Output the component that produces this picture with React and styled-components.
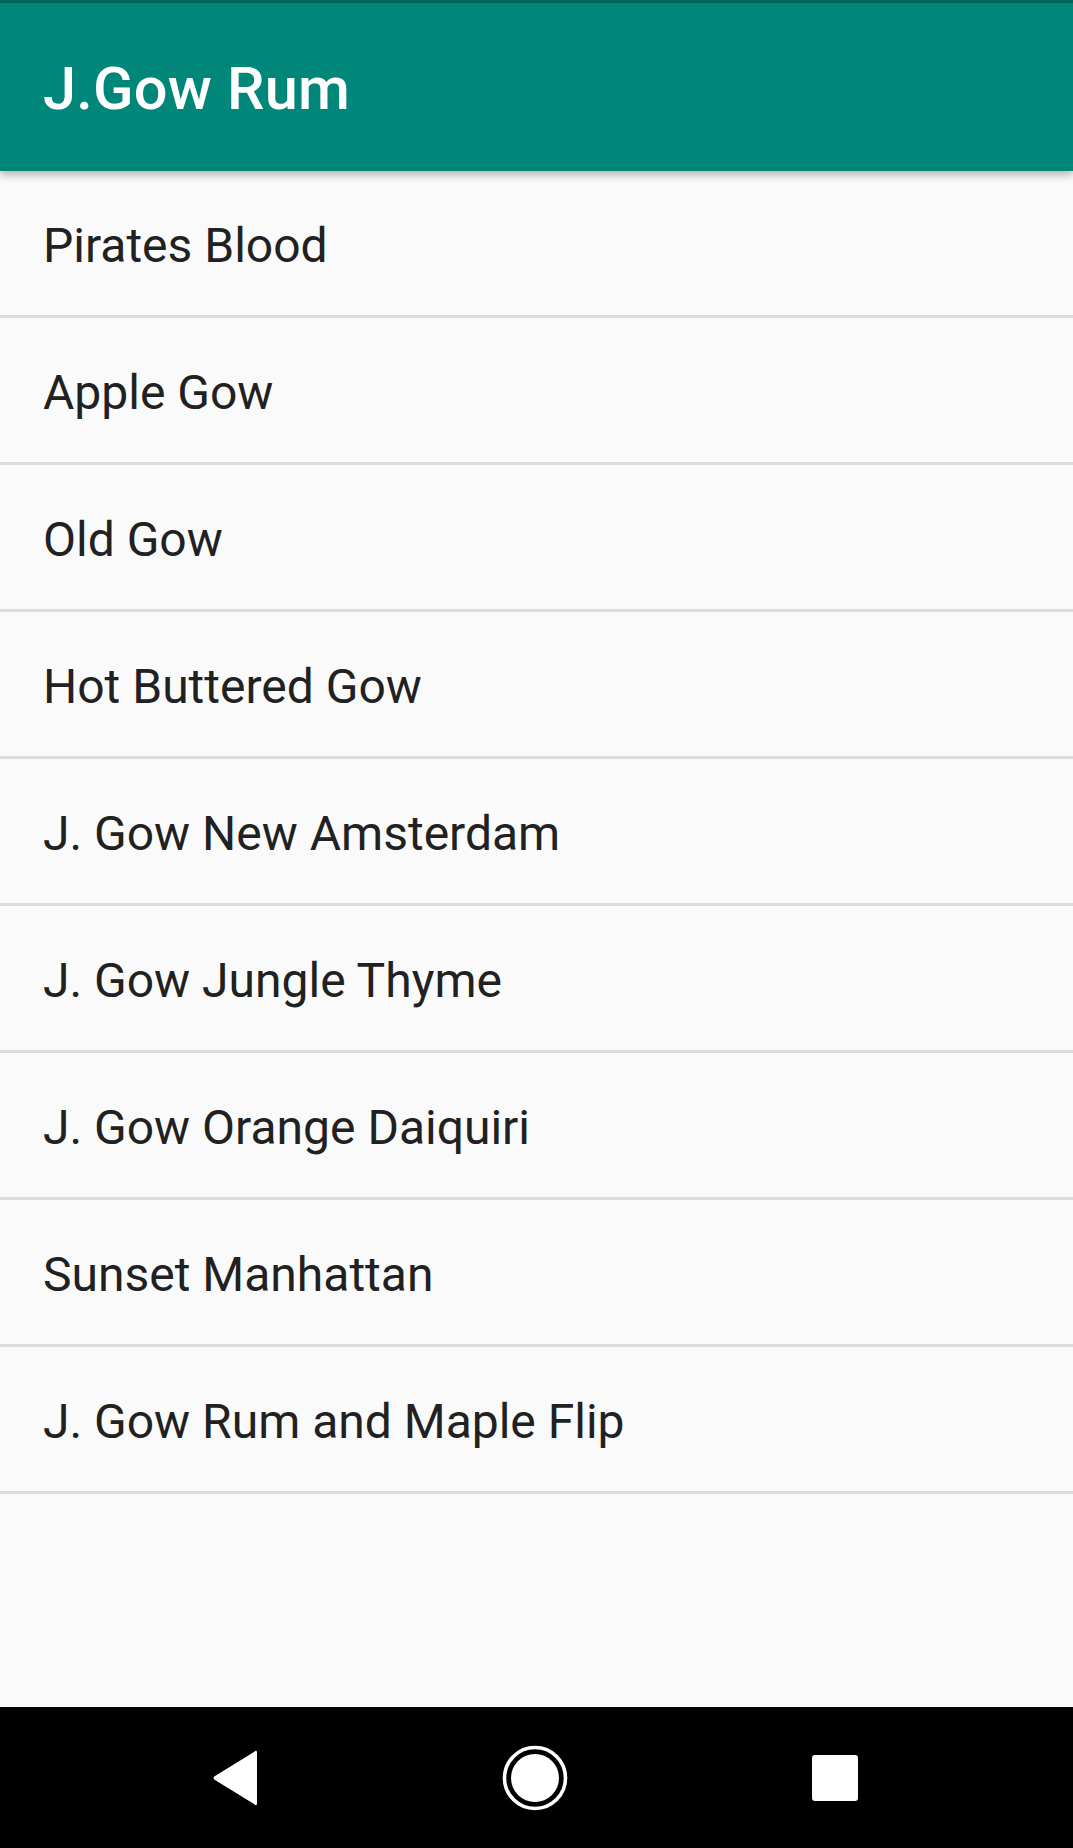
import styled, { createGlobalStyle } from "styled-components";

const drinks = [
  "Pirates Blood",
  "Apple Gow",
  "Old Gow",
  "Hot Buttered Gow",
  "J. Gow New Amsterdam",
  "J. Gow Jungle Thyme",
  "J. Gow Orange Daiquiri",
  "Sunset Manhattan",
  "J. Gow Rum and Maple Flip",
];

const GlobalStyle = createGlobalStyle`
  html, body {
    margin: 0;
    padding: 0;
    background: #fafafa;
  }
  * {
    box-sizing: border-box;
  }
`;

const Screen = styled.div`
  width: 1073px;
  height: 1848px;
  display: flex;
  flex-direction: column;
  background: #fafafa;
  font-family: Roboto, "Noto Sans", sans-serif;
  overflow: hidden;
`;

const StatusEdge = styled.div`
  height: 3px;
  background: #00695c;
`;

const Toolbar = styled.header`
  position: relative;
  z-index: 1;
  height: 168px;
  display: flex;
  align-items: center;
  padding: 4px 43px 0;
  background: #00877a;
  box-shadow: 0 4px 8px rgba(0, 0, 0, 0.28);
`;

const Title = styled.h1`
  margin: 0;
  color: #fff;
  font-size: 59.5px;
  font-weight: 500;
  letter-spacing: 0.2px;
`;

const List = styled.ul`
  flex: 1;
  margin: 0;
  padding: 0;
  list-style: none;
`;

const Row = styled.li`
  height: 147px;
  display: flex;
  align-items: center;
  padding: 4px 43px 0;
  border-bottom: 3px solid #dcdcdc;
  color: #212121;
  font-size: 48px;
`;

const NavBar = styled.nav`
  height: 141px;
  background: #000;
  display: flex;
  align-items: center;
  justify-content: center;
  padding-right: 4px;
`;

const NavSlot = styled.div`
  width: 300px;
  display: flex;
  justify-content: center;
  align-items: center;
`;

const App = () => {
  return (
    <Screen>
      <GlobalStyle />
      <StatusEdge />
      <Toolbar>
        <Title>J.Gow Rum</Title>
      </Toolbar>
      <List>
        {drinks.map((d) => (
          <Row key={d}>{d}</Row>
        ))}
      </List>
      <NavBar>
        <NavSlot>
          <svg width="50" height="58" viewBox="0 0 50 58">
            <path
              d="M47 4 L47 54 Q47 58 44 55 L5 31 Q2 29 5 27 L44 3 Q47 0 47 4 Z"
              fill="#fff"
            />
          </svg>
        </NavSlot>
        <NavSlot>
          <svg width="68" height="68" viewBox="0 0 68 68">
            <circle cx="34" cy="34" r="30.5" fill="none" stroke="#fff" strokeWidth="3.6" />
            <circle cx="34" cy="34" r="24" fill="#fff" />
          </svg>
        </NavSlot>
        <NavSlot>
          <svg width="46" height="46" viewBox="0 0 46 46">
            <rect x="0" y="0" width="46" height="46" rx="3" fill="#fff" />
          </svg>
        </NavSlot>
      </NavBar>
    </Screen>
  );
};

export default App;
